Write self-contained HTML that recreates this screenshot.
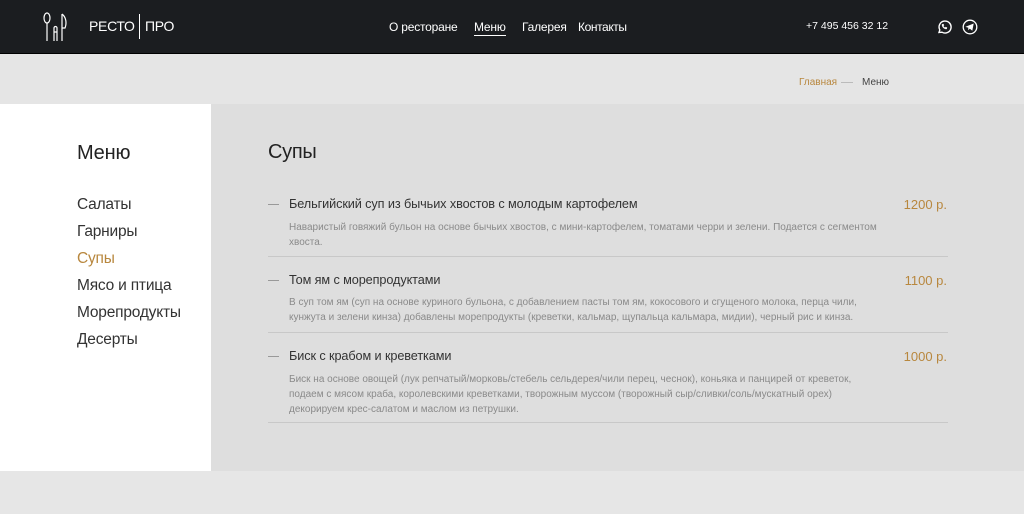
<!DOCTYPE html>
<html><head><meta charset="utf-8"><style>
*{margin:0;padding:0;box-sizing:border-box}
body{width:1024px;height:514px;overflow:hidden;background:#e6e6e6;font-family:"Liberation Sans",sans-serif;position:relative}
.hdr{position:absolute;left:0;top:0;width:1024px;height:54px;background:#1b1d20;color:#fff;border-bottom:1px solid #000}
.abs{position:absolute;white-space:nowrap}
.band{position:absolute;left:0;top:54px;width:1024px;height:50px;background:#e5e5e5}
.side{position:absolute;left:0;top:104px;width:211px;height:367px;background:#fff}
.main{position:absolute;left:211px;top:104px;width:813px;height:367px;background:#dedede}
.side .it{position:absolute;left:77px;font-size:15.5px;color:#333;letter-spacing:-.2px}
.dash{position:absolute;width:11px;height:1px;background:#999}
.t{position:absolute;left:289px;font-size:12.7px;color:#333;letter-spacing:-.1px;white-space:nowrap}
.p{position:absolute;right:77px;font-size:13px;color:#b8873e;white-space:nowrap}
.d{position:absolute;left:289px;font-size:10px;line-height:15px;color:#8a8a8a;white-space:nowrap;letter-spacing:0}
.ln{position:absolute;left:268px;width:680px;height:1px;background:#c8c8c8}
</style></head><body>
<div class="hdr">
<svg class="abs" style="left:42px;top:12px" width="28" height="32" viewBox="0 0 28 32" fill="none" stroke="#fff" stroke-width="1.2">
<ellipse cx="5" cy="6" rx="3" ry="5"/><path d="M5 11v18"/>
<path d="M12 16v13M15 16v13M12 20h3M12 16a1.5 1.5 0 0 1 3 0"/>
<path d="M20 2v27M20 2c4 3 5 9 3 14h-3"/>
</svg>
<div class="abs" style="left:89px;top:18px;font-size:14px;letter-spacing:-.3px">РЕСТО</div>
<div class="abs" style="left:139px;top:14px;width:1px;height:25px;background:#fff"></div>
<div class="abs" style="left:145px;top:18px;font-size:14px;letter-spacing:-.3px">ПРО</div>
<div class="abs" style="left:389px;top:20px;font-size:12px;letter-spacing:-.2px">О ресторане</div>
<div class="abs" style="left:474px;top:20px;font-size:12px;letter-spacing:-.2px;border-bottom:1px solid #fff;padding-bottom:1px">Меню</div>
<div class="abs" style="left:522px;top:20px;font-size:12px;letter-spacing:-.2px">Галерея</div>
<div class="abs" style="left:578px;top:20px;font-size:12px;letter-spacing:-.4px">Контакты</div>
<div class="abs" style="left:806px;top:20px;font-size:10.5px">+7 495 456 32 12</div>
<svg class="abs" style="left:936px;top:19px" width="16" height="16" viewBox="0 0 16 16" fill="none" stroke="#fff" stroke-width="1.4"><path d="M3 13.5l.8-2.6A6 6 0 1 1 6 13.2z"/><path d="M6 5.5c0 2.5 2 4.5 4.5 4.5l.5-1.3-1.3-.6-.7.6C8 8.2 7.5 7.7 7.3 7l.6-.7-.6-1.3z" fill="#fff" stroke-width=".5"/></svg>
<svg class="abs" style="left:962px;top:19px" width="16" height="16" viewBox="0 0 16 16" fill="none" stroke="#fff" stroke-width="1.3"><circle cx="8" cy="8" r="6.8"/><path d="M4.3 7.8l7-2.8-1.2 6.2-2.3-1.9-1.3 1.2.1-2z" fill="#fff" stroke-width=".6"/></svg>
</div>
<div class="band"></div>
<div class="abs" style="left:799px;top:77px;font-size:10px;color:#b8873e">Главная</div>
<div class="abs" style="left:841px;top:82px;width:12px;height:1px;background:#bbb"></div>
<div class="abs" style="left:862px;top:77px;font-size:10px;color:#444">Меню</div>
<div class="side">
<div class="it" style="top:38px;font-size:20px;color:#222">Меню</div>
<div class="it" style="top:92px">Салаты</div>
<div class="it" style="top:119px">Гарниры</div>
<div class="it" style="top:146px;color:#b8873e">Супы</div>
<div class="it" style="top:173px">Мясо и птица</div>
<div class="it" style="top:200px">Морепродукты</div>
<div class="it" style="top:227px">Десерты</div>
</div>
<div class="main"></div>
<div class="abs" style="left:268px;top:141px;font-size:20px;color:#222;letter-spacing:-.3px">Супы</div>

<div class="dash" style="left:268px;top:204px"></div>
<div class="t" style="top:197px">Бельгийский суп из бычьих хвостов с молодым картофелем</div>
<div class="p" style="top:197px">1200 р.</div>
<div class="d" style="top:220px">Наваристый говяжий бульон на основе бычьих хвостов, с мини-картофелем, томатами черри и зелени. Подается с сегментом<br>хвоста.</div>
<div class="ln" style="top:256px"></div>

<div class="dash" style="left:268px;top:280px"></div>
<div class="t" style="top:273px">Том ям с морепродуктами</div>
<div class="p" style="top:273px">1100 р.</div>
<div class="d" style="top:295px">В суп том ям (суп на основе куриного бульона, с добавлением пасты том ям, кокосового и сгущеного молока, перца чили,<br>кунжута и зелени кинза) добавлены морепродукты (креветки, кальмар, щупальца кальмара, мидии), черный рис и кинза.</div>
<div class="ln" style="top:332px"></div>

<div class="dash" style="left:268px;top:356px"></div>
<div class="t" style="top:349px">Биск с крабом и креветками</div>
<div class="p" style="top:349px">1000 р.</div>
<div class="d" style="top:372px">Биск на основе овощей (лук репчатый/морковь/стебель сельдерея/чили перец, чеснок), коньяка и панцирей от креветок,<br>подаем с мясом краба, королевскими креветками, творожным муссом (творожный сыр/сливки/соль/мускатный орех)<br>декорируем крес-салатом и маслом из петрушки.</div>
<div class="ln" style="top:422px"></div>
</body></html>
